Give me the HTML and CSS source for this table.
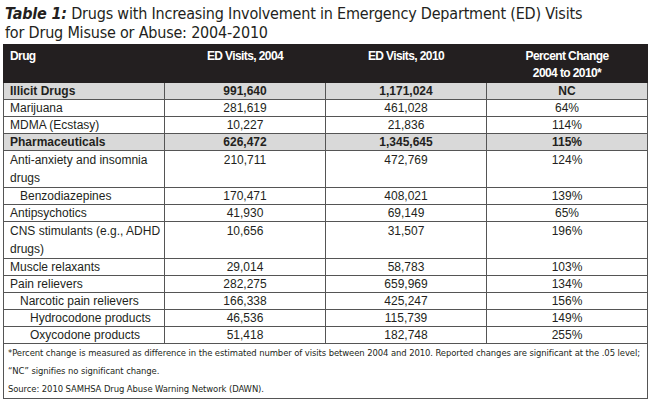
FILE: index.html
```html
<!DOCTYPE html>
<html>
<head>
<meta charset="utf-8">
<link rel="stylesheet" href="styles.css">
</head>
<body>
<div class="title"><b><i>Table 1:</i></b> Drugs with Increasing Involvement in Emergency Department (ED) Visits<br>for Drug Misuse or Abuse: 2004-2010</div>
<table class="data">
  <colgroup><col class="c"><col class="c"><col class="c"><col class="c"></colgroup>
  <thead>
    <tr><th class="left">Drug</th><th>ED Visits, 2004</th><th>ED Visits, 2010</th><th>Percent Change<br>2004 to 2010*</th></tr>
  </thead>
  <tbody>
    <tr class="group"><td class="name">Illicit Drugs</td><td>991,640</td><td>1,171,024</td><td>NC</td></tr>
    <tr><td class="name">Marijuana</td><td>281,619</td><td>461,028</td><td>64%</td></tr>
    <tr><td class="name">MDMA (Ecstasy)</td><td>10,227</td><td>21,836</td><td>114%</td></tr>
    <tr class="group"><td class="name">Pharmaceuticals</td><td>626,472</td><td>1,345,645</td><td>115%</td></tr>
    <tr class="tall"><td class="name">Anti-anxiety and insomnia drugs</td><td>210,711</td><td>472,769</td><td>124%</td></tr>
    <tr><td class="name in1">Benzodiazepines</td><td>170,471</td><td>408,021</td><td>139%</td></tr>
    <tr><td class="name">Antipsychotics</td><td>41,930</td><td>69,149</td><td>65%</td></tr>
    <tr class="tall"><td class="name">CNS stimulants (e.g., ADHD drugs)</td><td>10,656</td><td>31,507</td><td>196%</td></tr>
    <tr><td class="name">Muscle relaxants</td><td>29,014</td><td>58,783</td><td>103%</td></tr>
    <tr><td class="name">Pain relievers</td><td>282,275</td><td>659,969</td><td>134%</td></tr>
    <tr><td class="name in1">Narcotic pain relievers</td><td>166,338</td><td>425,247</td><td>156%</td></tr>
    <tr><td class="name in2">Hydrocodone products</td><td>46,536</td><td>115,739</td><td>149%</td></tr>
    <tr><td class="name in2">Oxycodone products</td><td>51,418</td><td>182,748</td><td>255%</td></tr>
    <tr class="note"><td colspan="4">*Percent change is measured as difference in the estimated number of visits between 2004 and 2010. Reported changes are significant at the .05 level;<br>“NC” signifies no significant change.<br>Source: 2010 SAMHSA Drug Abuse Warning Network (DAWN).</td></tr>
  </tbody>
</table>
</body>
</html>
```
FILE: styles.css
```css
html, body {
  margin: 0;
  padding: 0;
  background: #ffffff;
}
body {
  width: 650px;
  height: 405px;
  overflow: hidden;
  color: #231f20;
}
.title {
  font-family: "DejaVu Sans Condensed", "DejaVu Sans", sans-serif;
  font-stretch: condensed;
  font-size: 16px;
  letter-spacing: -0.2px;
  line-height: 19px;
  padding: 4px 5px 0;
  margin-bottom: 2px;
  height: 38px;
  white-space: nowrap;
}
.data {
  margin-left: 3px;
  width: 645px;
  table-layout: fixed;
  border-collapse: collapse;
  font-family: "Liberation Sans", Arial, sans-serif;
  font-size: 12px;
  line-height: 16px;
  color: #231f20;
}
.data .c { width: 25%; }
.data th {
  background: #231f20;
  color: #ffffff;
  font-family: "Liberation Sans", Arial, sans-serif;
  font-weight: bold;
  font-size: 12px;
  letter-spacing: -0.6px;
  line-height: 17px;
  height: 35px;
  padding: 3px 5px 0;
  vertical-align: top;
  text-align: center;
  border: 1px solid #231f20;
  box-sizing: border-box;
}
.data th.left { text-align: left; padding-left: 6px; }
.data td {
  border: 1px solid #555555;
  padding: 0 5px;
  text-align: center;
  vertical-align: top;
}
.data td.name { text-align: left; padding-left: 6px; padding-right: 0; }
.data td.in1 { padding-left: 16px; }
.data td.in2 { padding-left: 26px; }
.data tr.group td {
  background: #d9d9d9;
  font-weight: bold;
}
.data tr.tall td { line-height: 18px; }
.data tr.note td {
  text-align: left;
  font-family: "DejaVu Sans Condensed", "DejaVu Sans", sans-serif;
  font-stretch: condensed;
  font-size: 9.4px;
  letter-spacing: -0.08px;
  line-height: 18px;
  padding-left: 4px;
  padding-right: 2px;
  white-space: nowrap;
}
```
